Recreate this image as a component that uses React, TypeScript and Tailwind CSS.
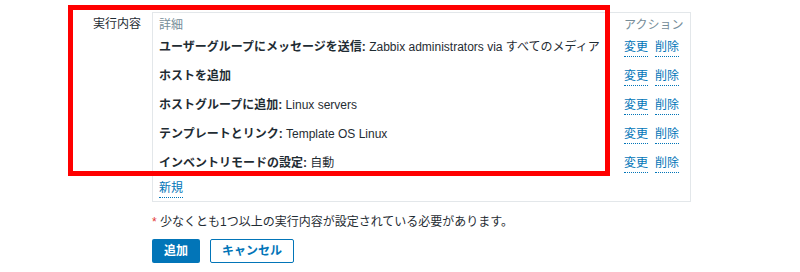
import React from "react";

const rows: { label: string; value: string }[] = [
  { label: "ユーザーグループにメッセージを送信:", value: "Zabbix administrators via すべてのメディア" },
  { label: "ホストを追加", value: "" },
  { label: "ホストグループに追加:", value: "Linux servers" },
  { label: "テンプレートとリンク:", value: "Template OS Linux" },
  { label: "インベントリモードの設定:", value: "自動" },
];

function Link({ children }: { children: React.ReactNode }) {
  return (
    <span className="text-[#0275b8] border-b border-dotted border-[#0275b8] leading-[17px] h-[18px] inline-block">
      {children}
    </span>
  );
}

export default function App() {
  return (
    <div className="relative w-[800px] h-[272px] bg-white text-[12px] text-[#1f2c33] font-[family-name:'Liberation_Sans','Noto_Sans_CJK_JP',sans-serif] overflow-hidden">
      <div className="flex pt-[12px]">
        <div className="w-[141px] text-right pt-[4px] leading-[17px] shrink-0">実行内容</div>
        <div className="ml-[11px]">
          <div className="w-[539px] border border-[#e3e7ea] grid grid-cols-[466px_1fr]">
            <div className="pl-[6px] pt-[4px] h-[20px] leading-[16px] text-[#768d99]">詳細</div>
            <div className="pl-[5px] pt-[4px] h-[20px] leading-[16px] text-[#768d99]">アクション</div>
            {rows.map((r, i) => (
              <React.Fragment key={i}>
                <div className="pl-[6px] pt-[6px] h-[29px] leading-[17px] whitespace-nowrap">
                  <span className="font-bold">{r.label}</span>
                  {r.value ? " " + r.value : ""}
                </div>
                <div className="pl-[5px] pt-[6px] h-[29px] leading-[17px] flex gap-[7px] items-start">
                  <Link>変更</Link>
                  <Link>削除</Link>
                </div>
              </React.Fragment>
            ))}
            <div className="pl-[6px] pt-[2px] h-[23px] leading-[17px] col-span-2">
              <Link>新規</Link>
            </div>
          </div>
          <div className="mt-[12px] leading-[17px]">
            <span className="text-[#e33734]">*</span> 少なくとも1つ以上の実行内容が設定されている必要があります。
          </div>
          <div className="mt-[8px] flex gap-[10px]">
            <button className="h-[24px] w-[48px] rounded-[2px] bg-[#0275b8] text-white font-bold leading-[22px]">
              追加
            </button>
            <button className="h-[24px] w-[84px] rounded-[2px] border border-[#0275b8] bg-white text-[#0275b8] font-bold leading-[22px]">
              キャンセル
            </button>
          </div>
        </div>
      </div>
      <div className="absolute left-[68px] top-[5px] w-[542px] h-[171px] border-[5px] border-[#ff0000] pointer-events-none" />
    </div>
  );
}
